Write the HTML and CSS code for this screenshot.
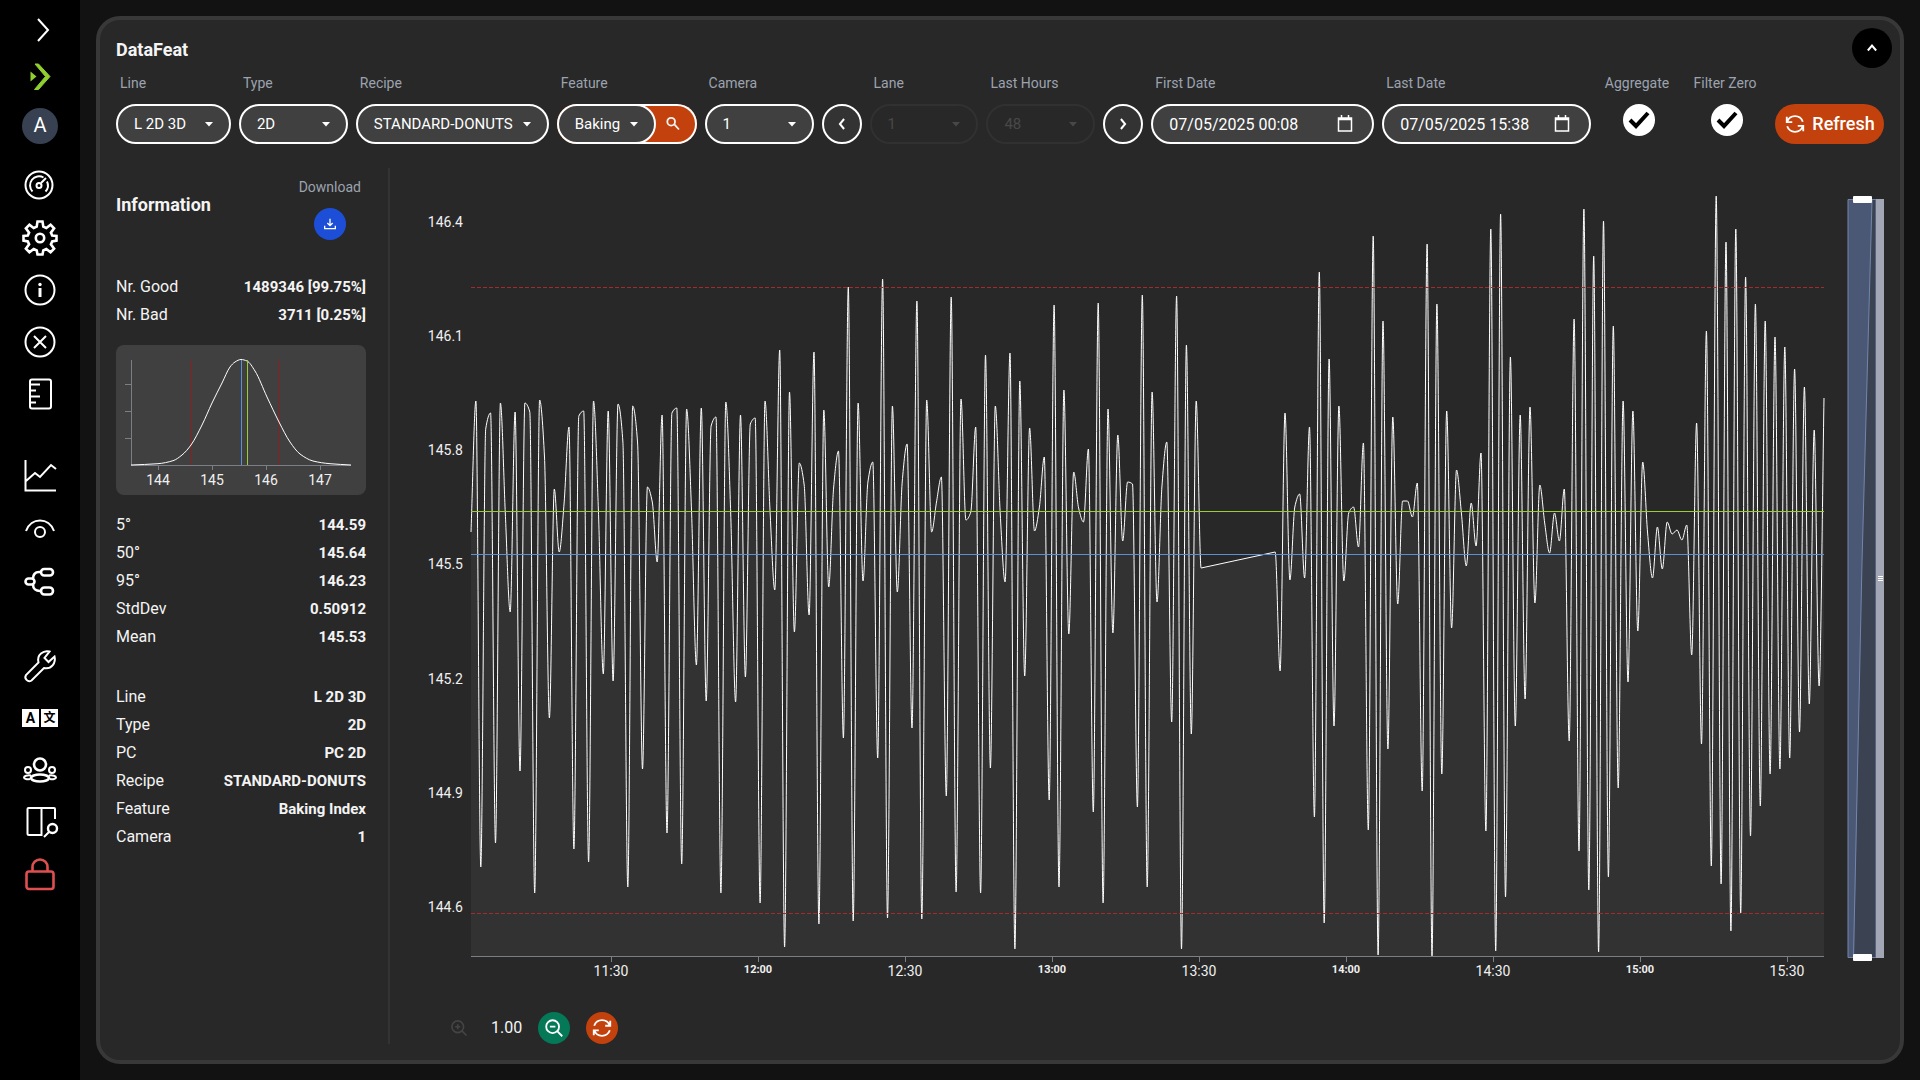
FILE: index.html
```html
<!DOCTYPE html>
<html lang="en">
<head>
<meta charset="utf-8">
<title>DataFeat</title>
<link rel="stylesheet" href="styles.css">
</head>
<body>
<nav class="sidebar" aria-label="Main">
  <div class="nav-group nav-head">
    <a href="#" aria-label="Expand"><svg viewBox="0 0 36 36"><path d="M16 7l10 11-10 11"/></svg></a>
    <a href="#" aria-label="Home"><svg viewBox="0 0 36 36"><path d="M13 4h3.500L28 16.500 16.500 29.500h-4L23.500 16.500z" fill="#8fd02f" stroke="#8fd02f" stroke-width="1"/><path d="M8.500 11.500l6 5-6 5z" fill="#8fd02f" stroke="none"/></svg></a>
    <a href="#" class="avatar" aria-label="Account">A</a>
  </div>
  <div class="nav-group">
    <a href="#" aria-label="Dashboard"><svg viewBox="0 0 36 36"><circle cx="17" cy="17" r="13.500"/><path d="M10.500 23.500a9 9 0 0 1 11-14M25 13.500a9 9 0 0 1-1.500 10M19 15l5-5"/><circle cx="17" cy="17.500" r="2.500"/></svg></a>
    <a href="#" aria-label="Settings"><svg viewBox="0 0 36 36"><path stroke-width="2.600" d="M15.500 1.500h5l.8 5.200 3 1.300 4.300-3.200 3.500 3.500-3.200 4.300 1.300 3 4.300.4v4.600l-4.300.8-1.300 3 3.200 4.300-3.500 3.500-4.300-3.200-3 1.300-.8 4.200h-5l-.8-4.200-3-1.300-4.300 3.200-3.500-3.500 3.200-4.300-1.300-3-4.300-.8V16l4.300-.4 1.300-3-3.200-4.300 3.500-3.500L11.700 8l3-1.300z"/><circle cx="18" cy="18" r="4.200" stroke-width="2.600"/></svg></a>
    <a href="#" aria-label="Information"><svg viewBox="0 0 36 36"><circle cx="18" cy="18" r="14.500"/><path d="M18 16v9" stroke-width="3" stroke-linecap="butt"/><circle cx="18" cy="12.500" r="1.700" fill="#fff" stroke="none"/></svg></a>
    <a href="#" aria-label="Rejects"><svg viewBox="0 0 36 36"><circle cx="18" cy="18" r="14.500"/><path d="M12 12l12 12M24 12L12 24"/></svg></a>
    <a href="#" aria-label="Measures"><svg viewBox="0 0 36 36"><rect x="8" y="3.500" width="21" height="29" rx="2"/><path d="M8 8.500h10M8 14.500h6M8 20.500h10M8 26.500h6"/></svg></a>
  </div>
  <div class="nav-group">
    <a href="#" aria-label="Charts"><svg viewBox="0 0 36 36"><path d="M3.500 0v30.500H34M4 21l9-8 5 4L29 5l5 4"/></svg></a>
    <a href="#" aria-label="Vision"><svg viewBox="0 0 36 36"><path d="M4 19c5-14 23-14 28 0"/><circle cx="18" cy="20" r="5"/></svg></a>
    <a href="#" aria-label="Flow"><svg viewBox="0 0 36 36"><g stroke-width="2.600"><rect x="3.500" y="14.500" width="9" height="6" rx="3"/><rect x="19" y="5" width="12" height="6.500" rx="3.200"/><rect x="19" y="23.500" width="12" height="7" rx="3.500"/><path d="M19 8h-2c-4 0-6 3-6 6.500M11 20.500c0 4 3 6.500 7 6.500"/></g></svg></a>
  </div>
  <div class="nav-group">
    <a href="#" aria-label="Tools"><svg viewBox="0 0 36 36"><path d="M27.500 3.500c-6-1.500-13 3-11 11L4 27a4 4 0 0 0 5.500 5.500L22 20c8 1.500 12-5.500 10.500-11.500l-6 5.500-4-4z"/></svg></a>
    <a href="#" class="lang" aria-label="Language"><span>A</span><span>文</span></a>
    <a href="#" aria-label="Users"><svg viewBox="0 0 36 36"><circle cx="18" cy="12.500" r="6" stroke-width="2.600"/><ellipse cx="18" cy="26" rx="9" ry="3.500" stroke-width="2.600"/><circle cx="6" cy="18" r="3"/><circle cx="30" cy="18" r="3"/><path d="M9 23.500c-4-.5-7 .5-7 2s3 2 6 1.500M27 23.500c4-.5 7 .5 7 2s-3 2-6 1.500"/></svg></a>
    <a href="#" aria-label="Inspect"><svg viewBox="0 0 36 36"><path d="M33 15V5q0-1-1-1H6.500q-1 0-1 1v24.500q0 1.500 1.500 1.500h12.500V4M22 33l5-5"/><circle cx="30.500" cy="24.500" r="4.500" stroke-width="2.400"/></svg></a>
    <a href="#" aria-label="Log out"><svg viewBox="0 0 36 36"><g stroke="#e04f50" stroke-width="2.600"><rect x="4.500" y="15.500" width="27" height="17.500" rx="2.500"/><path d="M10.500 15V11a7.500 7.500 0 0 1 15 0v4"/></g></svg></a>
  </div>
</nav>

<main class="panel">
  <header class="panel-head">
    <h1>DataFeat</h1>
    <button class="round collapse" aria-label="Collapse"><svg viewBox="0 0 24 24"><path d="M7 15l5-6 5 6" stroke-width="2.400"/></svg></button>
  </header>

  <form class="filters">
    <div class="field w-line"><label for="line">Line</label><select id="line"><option>L 2D 3D</option></select></div>
    <div class="field w-std"><label for="type">Type</label><select id="type"><option>2D</option></select></div>
    <div class="field w-recipe"><label for="recipe">Recipe</label><select id="recipe"><option>STANDARD-DONUTS</option></select></div>
    <div class="field w-feature"><label for="feature">Feature</label>
      <div class="combo"><select id="feature"><option>Baking</option></select><button type="button" class="search" aria-label="Search feature"><svg viewBox="0 0 24 24"><circle cx="10" cy="9.500" r="4.200"/><path d="M13.500 12.500L18.500 18"/></svg></button></div></div>
    <div class="field w-std"><label for="camera">Camera</label><select id="camera"><option>1</option></select></div>
    <button type="button" class="round step" aria-label="Previous"><svg viewBox="0 0 24 24"><path d="M14.500 6l-5 6 5 6" stroke-width="2.400"/></svg></button>
    <div class="field w-std"><label for="lane">Lane</label><select id="lane" disabled><option>1</option></select></div>
    <div class="field w-std"><label for="hours">Last Hours</label><select id="hours" disabled><option>48</option></select></div>
    <button type="button" class="round step" aria-label="Next"><svg viewBox="0 0 24 24"><path d="M9.500 6l5 6-5 6" stroke-width="2.400"/></svg></button>
    <div class="field w-first"><label for="first">First Date</label><input class="date" id="first" type="text" value="07/05/2025 00:08"></div>
    <div class="field w-last"><label for="last">Last Date</label><input class="date" id="last" type="text" value="07/05/2025 15:38"></div>
    <div class="field check"><label for="aggregate">Aggregate</label><input id="aggregate" type="checkbox" checked></div>
    <div class="field check"><label for="zero">Filter Zero</label><input id="zero" type="checkbox" checked></div>
    <button type="button" class="refresh"><svg viewBox="0 0 24 24"><path d="M3.500 9.500a9 9 0 0 1 17 0M20.500 14.500a9 9 0 0 1-17 0M3 4v6h6M21 20v-6h-6"/></svg>Refresh</button>
  </form>

  <div class="content">
    <aside class="info">
      <div class="info-head">
        <h2>Information</h2>
        <div class="download"><label for="download">Download</label><button id="download" class="round blue"><svg viewBox="0 0 24 24"><path d="M12 4v10M8 10.500l4 4 4-4M4 14.500V19h16v-4.500"/></svg></button></div>
      </div>
      <dl>
        <div><dt>Nr. Good</dt><dd>1489346 [99.75%]</dd></div>
        <div><dt>Nr. Bad</dt><dd>3711 [0.25%]</dd></div>
      </dl>
      <svg class="histogram" viewBox="0 0 250 150" role="img" aria-label="Distribution">
        <path class="axis" d="M15.500 15v105M9 39.500h6M9 66.500h6M9 93.500h6M15 120.500h220M42.500 121v4M96.500 121v4M150.500 121v4M204.500 121v4"/>
        <path class="limit" d="M74.500 15v105M163.500 15v105"/>
        <path class="curve" id="bell"/>
        <path class="mean" d="M125.500 15v105"/><path class="median" d="M131.500 15v105"/>
        <g class="tick mid"><text x="42" y="140">144</text><text x="96" y="140">145</text><text x="150" y="140">146</text><text x="204" y="140">147</text></g>
      </svg>
      <dl>
        <div><dt>5°</dt><dd>144.59</dd></div>
        <div><dt>50°</dt><dd>145.64</dd></div>
        <div><dt>95°</dt><dd>146.23</dd></div>
        <div><dt>StdDev</dt><dd>0.50912</dd></div>
        <div><dt>Mean</dt><dd>145.53</dd></div>
      </dl>
      <dl>
        <div><dt>Line</dt><dd>L 2D 3D</dd></div>
        <div><dt>Type</dt><dd>2D</dd></div>
        <div><dt>PC</dt><dd>PC 2D</dd></div>
        <div><dt>Recipe</dt><dd>STANDARD-DONUTS</dd></div>
        <div><dt>Feature</dt><dd>Baking Index</dd></div>
        <div><dt>Camera</dt><dd>1</dd></div>
      </dl>
    </aside>

    <section class="chart">
      <svg class="plot" viewBox="390 168 1494 820" role="img" aria-label="Baking Index over time">
        <path class="area" id="area"/>
        <path class="curve" id="series"/>
        <path class="axis" d="M471 956.500H1824M611.500 957v5M758.500 957v5M905.500 957v5M1052.500 957v5M1199.500 957v5M1346.500 957v5M1493.500 957v5M1640.500 957v5M1787.500 957v5"/>
        <path class="limit dashed" d="M471 287.500H1824M471 913.500H1824"/>
        <path class="median" d="M471 511.500H1824"/>
        <path class="mean" d="M471 554.500H1824"/>
        <g class="tick end"><text x="463" y="227">146.4</text><text x="463" y="341">146.1</text><text x="463" y="455">145.8</text><text x="463" y="569">145.5</text><text x="463" y="684">145.2</text><text x="463" y="798">144.9</text><text x="463" y="912">144.6</text></g>
        <g class="tick mid"><text x="611" y="976">11:30</text><text x="905" y="976">12:30</text><text x="1199" y="976">13:30</text><text x="1493" y="976">14:30</text><text x="1787" y="976">15:30</text></g>
        <g class="tick mid hour"><text x="758" y="973">12:00</text><text x="1052" y="973">13:00</text><text x="1346" y="973">14:00</text><text x="1640" y="973">15:00</text></g>
        <g class="slider">
          <rect class="track" x="1848" y="199.500" width="28" height="758"/>
          <path class="fill" d="M1848 200h24l-10 362-8 395h-6z"/>
          <path class="edge" d="M1872 200l-10 362-8.500 395M1848 199.500h28v758h-28z"/>
          <rect class="strip" x="1876" y="199" width="8" height="759"/>
          <path class="grip" d="M1878 576.500h5M1878 578.500h5M1878 580.500h5"/>
          <rect class="handle" x="1853" y="196" width="19" height="7" rx="1"/><rect class="handle" x="1853" y="954" width="19" height="7" rx="1"/>
        </g>
      </svg>
      <div class="zoom-bar">
        <button class="round" disabled aria-label="Zoom in"><svg viewBox="0 0 24 24"><circle cx="10.500" cy="10.500" r="7"/><path d="M15.500 15.500l5.500 5.500M7.500 10.500h6M10.500 7.500v6"/></svg></button>
        <output>1.00</output>
        <button class="round green" aria-label="Zoom out"><svg viewBox="0 0 24 24"><circle cx="10.500" cy="10.500" r="7"/><path d="M15.500 15.500l5.500 5.500M7.500 10.500h6"/></svg></button>
        <button class="round orange" aria-label="Reset zoom"><svg viewBox="0 0 24 24"><path d="M3.500 9.500a9 9 0 0 1 17 0M20.500 14.500a9 9 0 0 1-17 0M21 4v5.500h-5.500M3 20v-5.500h5.500"/></svg></button>
      </div>
    </section>
  </div>
</main>
<script src="chart.js"></script>
</body>
</html>
```
FILE: styles.css
```css
* { box-sizing: border-box; }
body {
  margin: 0;
  min-height: 100vh;
  display: flex;
  background: #121212;
  color: #f4f4f4;
  font: 16px/28px Roboto, "Liberation Sans", sans-serif;
}
button, input, select { font: inherit; color: inherit; margin: 0; }
button { cursor: pointer; border: 0; padding: 0; }
svg { fill: none; stroke: currentColor; stroke-width: 2; }

.sidebar {
  flex: 0 0 80px;
  background: #000;
  padding: 12px 22px;
  display: flex;
  flex-direction: column;
  gap: 48px;
}
.nav-group { display: flex; flex-direction: column; gap: 16px; }
.nav-head { gap: 12px; margin-bottom: -24px; }
.nav-group a { display: block; height: 36px; color: #fff; text-decoration: none; }
.nav-group svg { display: block; width: 36px; height: 36px; overflow: visible; }
.nav-group .avatar {
  border-radius: 50%;
  background: #374151;
  font-size: 20px;
  line-height: 34px;
  text-align: center;
}
.nav-group .lang { display: flex; gap: 2px; align-items: center; }
.lang span {
  flex: 1;
  height: 18px;
  background: #fff;
  color: #000;
  font: 700 14px/18px Roboto, "Noto Sans CJK SC", sans-serif;
  text-align: center;
}
.lang span + span { font-size: 12px; }

.panel {
  flex: 1;
  min-width: 0;
  margin: 16px;
  padding: 8px 16px 16px;
  border: 4px solid #383838;
  border-radius: 24px;
  background: #282828;
}
.panel-head { display: flex; align-items: center; justify-content: space-between; margin-right: -8px; }
h1, h2 { margin: 0; font-size: 18px; line-height: 28px; font-weight: 700; }
h1 { padding-top: 4px; }

.round {
  flex: none;
  display: grid;
  place-items: center;
  width: 32px;
  height: 32px;
  border-radius: 50%;
  background: transparent;
  color: #fff;
}
.round svg { width: 20px; height: 20px; }
.collapse { width: 40px; height: 40px; background: #000; }
.blue { background: #1d4ed8; }
.blue svg { width: 16px; height: 16px; }
.green { background: #047857; }
.orange { background: #c2410c; }
.green svg, .orange svg { width: 22px; height: 22px; }
.round:disabled { color: #444; }

.filters { display: flex; align-items: flex-end; gap: 8px; }
.field { min-width: 0; display: flex; flex-direction: column; gap: 6px; }
.field label, .download label { font-size: 14px; line-height: 30px; color: #9ca3af; white-space: nowrap; }
.field label { padding-left: 4px; }
.w-line { flex: 1 1 115px; }
.w-std { flex: 1 1 109px; }
.w-recipe { flex: 1 1 193px; }
.w-feature { flex: 1 1 140px; }
.w-first { flex: 1 1 223px; }
.w-last { flex: 1 1 209px; }

select, .date {
  width: 100%;
  height: 40px;
  padding: 0 16px;
  border: 2px solid #fff;
  border-radius: 20px;
  background: #404040 no-repeat;
  color: #fff;
}
select {
  appearance: none;
  font-size: 15px;
  background-image: url("data:image/svg+xml,%3Csvg xmlns='http://www.w3.org/2000/svg' width='8' height='5'%3E%3Cpath d='M0 0h8L4 4.500z' fill='white'/%3E%3C/svg%3E");
  background-position: right 16px center;
}
select:disabled { opacity: 1; color: #484848; border-color: #313131; background-color: #282828;
  background-image: url("data:image/svg+xml,%3Csvg xmlns='http://www.w3.org/2000/svg' width='8' height='5'%3E%3Cpath d='M0 0h8L4 4.500z' fill='%23484848'/%3E%3C/svg%3E"); }
.date {
  background-image: url("data:image/svg+xml,%3Csvg xmlns='http://www.w3.org/2000/svg' width='16' height='18' fill='none' stroke='white' stroke-width='1.500'%3E%3Cpath d='M1.500 3h13v13h-13zM1.500 4.500h13M4.500 0v3M11.500 0v3'/%3E%3C/svg%3E");
  background-position: right 19px center;
}
.combo { display: flex; height: 40px; border-radius: 20px; background: #c2410c; }
.combo select { position: relative; z-index: 1; flex: 1; min-width: 0; }
.combo .search {
  flex: 0 0 61px;
  margin-left: -20px;
  padding-left: 16px;
  border: 2px solid #fff;
  border-left: 0;
  border-radius: 0 20px 20px 0;
  background: none;
  display: grid;
  place-items: center;
}
.search svg { width: 22px; height: 22px; }
.step { width: 40px; height: 40px; border: 2px solid #fff; background: #333; }

.check { flex: 0 0 80px; align-items: center; padding-bottom: 8px; }
.check label { padding: 0 4px 0 0; }
.check input {
  appearance: none;
  width: 32px;
  height: 32px;
  border-radius: 50%;
  background: #fff;
}
.check input:checked {
  background-image: url("data:image/svg+xml,%3Csvg xmlns='http://www.w3.org/2000/svg' width='32' height='32' fill='none' stroke='black' stroke-width='4'%3E%3Cpath d='M7 16l6 6L25 9'/%3E%3C/svg%3E");
}
.refresh {
  flex: 0 0 109px;
  height: 40px;
  border-radius: 20px;
  background: #c2410c;
  color: #fff;
  font-size: 18px;
  font-weight: 500;
  display: flex;
  align-items: center;
  justify-content: center;
  gap: 6px;
}
.refresh svg { width: 22px; height: 22px; }

.content { display: flex; margin-top: 24px; }
.info { flex: 0 0 274px; padding-right: 22px; border-right: 2px solid #333; }
.info-head { display: flex; justify-content: space-between; padding: 4px 5px 33px 0; }
.info-head h2 { padding-top: 19px; }
.download { display: flex; flex-direction: column; align-items: center; gap: 6px; }
dl { margin: 0 0 32px; }
dl div { display: flex; justify-content: space-between; }
dt, dd { margin: 0; white-space: nowrap; }
dd { font-size: 15px; font-weight: 700; }
.info-head + dl { margin-bottom: 16px; }
.histogram { display: block; width: 100%; margin-bottom: 16px; border-radius: 8px; background: #404040; }

.chart { flex: 1; min-width: 0; }
.plot { display: block; width: 100%; height: auto; }
.curve { stroke: #fff; stroke-width: 1; }
.area { fill: #fff; fill-opacity: .05; stroke: none; }
.axis { stroke: #7c7e86; stroke-width: 1; }
.limit { stroke: #8c2020; stroke-width: 1; }
.dashed { stroke-dasharray: 4 2; stroke: #a52a2a; }
.mean { stroke: #5b8fd6; stroke-width: 1; }
.median { stroke: #9acd32; stroke-width: 1; }
.tick { fill: #f0f0f0; stroke: none; font-size: 14px; }
.end { text-anchor: end; }
.mid { text-anchor: middle; }
.hour { font-size: 11px; font-weight: 700; }
.track { fill: #3b4353; stroke: none; }
.fill { fill: #4a5876; stroke: none; }
.edge { stroke: #7386aa; stroke-width: 1; }
.strip { fill: #a2a6b5; stroke: none; }
.grip { stroke: #fff; stroke-width: 1; }
.handle { fill: #fff; stroke: none; }
.zoom-bar { display: flex; align-items: center; gap: 16px; margin-top: 24px; padding-left: 53px; }
.zoom-bar output { width: 31px; text-align: center; }
```
FILE: chart.js
```javascript
// Builds a monotone cubic path through the points.
function monotone(points) {
  const n = points.length;
  const slope = [];
  for (let i = 0; i < n - 1; i++) {
    slope.push((points[i + 1][1] - points[i][1]) / (points[i + 1][0] - points[i][0]));
  }
  const tangent = points.map((p, i) => {
    if (i === 0) return slope[0];
    if (i === n - 1) return slope[n - 2];
    const a = slope[i - 1], b = slope[i];
    return a * b <= 0 ? 0 : (2 * a * b) / (a + b);
  });
  let d = "M" + points[0].join(" ");
  for (let i = 0; i < n - 1; i++) {
    const [x0, y0] = points[i], [x1, y1] = points[i + 1], h = (x1 - x0) / 3;
    // A long gap without samples is bridged by a straight line.
    if (h > 10) { d += "L" + x1 + " " + y1; continue; }
    d += "C" + [x0 + h, y0 + tangent[i] * h, x1 - h, y1 - tangent[i + 1] * h, x1, y1].map(v => v.toFixed(1)).join(" ");
  }
  return d;
}

// One sample per minute, before and after the production stop.
const STEP = 4.9;
const before = [
  532,401,867,429,413,843,403,513,612,412,771,403,412,893,400,457,718,489,552,503,
  427,849,416,411,862,401,510,674,411,681,404,442,887,406,443,769,487,502,562,415,
  833,413,408,864,409,510,665,408,701,426,417,893,402,513,702,415,677,424,418,903,
  401,508,590,350,947,392,632,463,485,615,352,924,410,587,488,451,738,287,921,403,
  581,482,462,758,279,918,406,592,482,444,728,301,919,400,532,502,477,796,297,892,
  399,520,512,427,893,355,768,406,513,582,353,949,381,676,428,531,507,457,800,305,
  887,390,634,472,508,522,449,812,303,903,409,633,435,541,482,484,807,295,887,392,
  602,487,442,722,296,949,345,734,401,568];
const after = [
  552,671,413,580,507,494,578,427,817,272,923,359,726,406,581,513,507,547,443,830,
  236,955,321,749,417,604,501,501,517,483,791,244,956,304,774,411,628,470,513,566,
  503,546,453,831,229,951,214,897,357,726,415,699,407,603,485,523,553,513,541,489,
  741,319,851,209,890,256,952,221,877,326,788,401,682,411,631,462,533,578,527,569,
  522,534,530,540,525,655,423,744,331,866,196,884,242,931,229,913,277,836,304,806,
  321,774,337,769,347,758,369,732,387,704,430,686,398];
const series = [
  ...before.map((y, i) => [471 + i * STEP, y]),
  ...after.map((y, i) => [1275.2 + i * STEP, y])
];
const line = monotone(series);
document.getElementById("series").setAttribute("d", line);
document.getElementById("area").setAttribute("d", line + "V956H471Z");

document.getElementById("bell").setAttribute("d", monotone([
  [15, 120], [42, 118.7], [57, 115.7], [66, 110], [75, 100], [86, 80], [96, 58], [106, 38],
  [114, 22], [119, 17], [125, 14.5], [131, 16], [139, 26], [151, 52], [163, 77], [174, 97],
  [184, 109], [197, 116], [214, 118.7], [235, 120]]));
```
